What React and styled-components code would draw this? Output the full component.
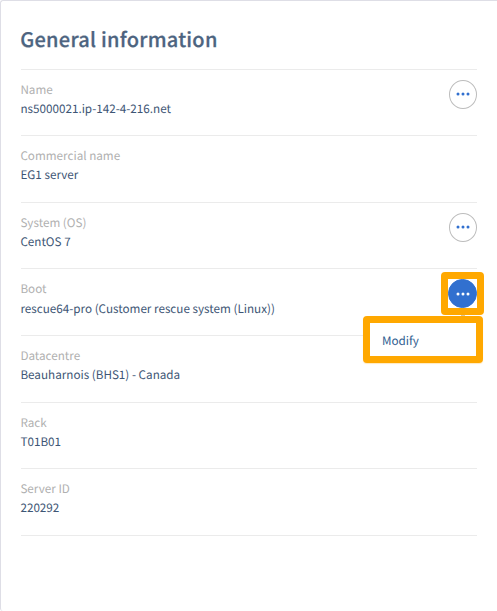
import React from "react";
import styled, { createGlobalStyle } from "styled-components";

const GlobalStyle = createGlobalStyle`
  * { box-sizing: border-box; }
  body {
    margin: 0;
    background: #fff;
    font-family: "Source Sans Pro", "Noto Sans CJK SC", "Noto Sans", sans-serif;
    text-rendering: geometricPrecision;
  }
`;

const Card = styled.section`
  height: 611px;
  padding: 0 20px;
  border-top: 1px solid #dedee6;
  border-left: 1px solid #dedee6;
  border-radius: 3px 0 0 3px;
  background: #fff;
  overflow: hidden;
`;

const Title = styled.h1`
  height: 68px;
  margin: 0 0 0 -0.75px;
  padding-top: 22px;
  color: #4d6480;
  font-size: 20px;
  font-weight: 500;
  line-height: 32px;
  letter-spacing: 0.25px;
  white-space: nowrap;
  -webkit-text-stroke: 0.25px #4d6480;
`;

const List = styled.dl`
  margin: 0;
  width: 456px;
  border-bottom: 1px solid #ebebeb;
`;

const Row = styled.div`
  display: flex;
  justify-content: space-between;
  height: ${({ $tall }) => ($tall ? 67 : 66)}px;
  border-top: 1px solid #ebebeb;
`;

const Info = styled.div`
  margin-left: -0.6px;
`;

const Label = styled.dt`
  padding-top: 10px;
  color: #b0b0b0;
  font-size: 11.7px;
  line-height: 20px;
`;

const Value = styled.dd`
  margin: 0;
  padding-top: ${({ $spaced }) => ($spaced ? 1 : 0)}px;
  color: #3e5675;
  font-size: 11.7px;
  line-height: 18px;
  white-space: nowrap;
`;

const Actions = styled.div`
  position: relative;
  padding-top: 10px;
`;

const MenuButton = styled.button`
  display: flex;
  align-items: center;
  justify-content: center;
  width: ${({ $active }) => ($active ? 29 : 28)}px;
  height: 29px;
  padding: ${({ $active }) => ($active ? "1px 0 0" : "0 0 1px")};
  border: 1px solid ${({ $active }) => ($active ? "#3170cf" : "#bdbdbd")};
  border-radius: 50%;
  background: ${({ $active }) => ($active ? "#3170cf" : "#fff")};
  color: ${({ $active }) => ($active ? "#fff" : "#3170cf")};
`;

const Highlight = styled.div`
  position: absolute;
  top: 3px;
  right: -7px;
  width: 43px;
  height: 43px;
  border: 7px solid #ffa800;
  border-radius: 4px;
`;

const Menu = styled.div`
  position: absolute;
  top: 47px;
  right: -6px;
  z-index: 1;
  width: 120px;
  height: 47px;
  padding-left: 12px;
  border: 7px solid #ffa800;
  border-radius: 4px;
  background: #fff;
  box-shadow: 0 1px 1px rgba(255, 168, 0, 0.25);
  color: #2f5d8f;
  font-size: 11.7px;
  line-height: 36px;

  &::before {
    content: "";
    position: absolute;
    top: -8px;
    right: 11px;
    width: 4px;
    height: 1px;
    background: #d9c7a0;
  }
`;

const Dots = () => (
  <svg width="14" height="4" viewBox="0 0 14 4" fill="currentColor">
    <circle cx="2" cy="2" r="1.5" />
    <circle cx="7" cy="2" r="1.5" />
    <circle cx="12" cy="2" r="1.5" />
  </svg>
);

const rows = [
  { label: "Name", value: "ns5000021.ip-142-4-216.net", menu: true },
  { label: "Commercial name", value: "EG1 server", tall: true },
  { label: "System (OS)", value: "CentOS 7", menu: true },
  {
    label: "Boot",
    value: "rescue64-pro (Customer rescue system (Linux))",
    menu: true,
    open: true,
    tall: true,
  },
  { label: "Datacentre", value: "Beauharnois (BHS1) - Canada", tall: true },
  { label: "Rack", value: "T01B01" },
  { label: "Server ID", value: "220292", tall: true },
];

export default function App() {
  return (
    <>
      <GlobalStyle />
      <Card>
        <Title>General information</Title>
        <List>
          {rows.map(({ label, value, menu, open, tall }) => (
            <Row key={label} $tall={tall}>
              <Info>
                <Label>{label}</Label>
                <Value $spaced={open}>{value}</Value>
              </Info>
              {menu && (
                <Actions>
                  <MenuButton $active={open} aria-label={`${label} actions`}>
                    <Dots />
                  </MenuButton>
                  {open && <Highlight />}
                  {open && <Menu>Modify</Menu>}
                </Actions>
              )}
            </Row>
          ))}
        </List>
      </Card>
    </>
  );
}
